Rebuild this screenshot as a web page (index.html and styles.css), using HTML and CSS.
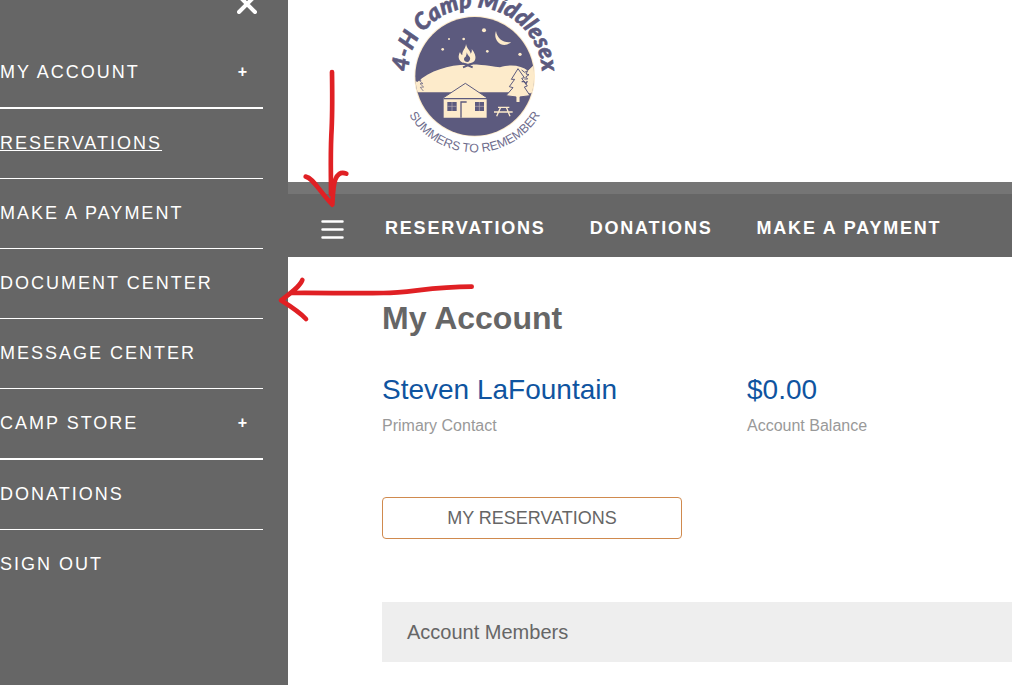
FILE: index.html
```
<!DOCTYPE html>
<html lang="en">
    <head>
        <meta charset="UTF-8">
        <title>My Account</title>
        <link rel="stylesheet" href="styles.css">
    </head>
    <body>
        <!-- side menu -->
        <aside class="sidebar">
            <div class="sidebar-top">
                <button type="button" class="close" aria-label="Close menu">
                    <svg width="20" height="20" viewBox="0 0 20 20">
                        <path d="M2 2L18 18M18 2L2 18"/>
                    </svg>
                </button>
            </div>
            <ul class="menu">
                <li class="has-sub"><a href="#">MY ACCOUNT</a><button type="button" class="plus">+</button></li>
                <li><a href="#" class="active">RESERVATIONS</a></li>
                <li><a href="#">MAKE A PAYMENT</a></li>
                <li><a href="#">DOCUMENT CENTER</a></li>
                <li><a href="#">MESSAGE CENTER</a></li>
                <li class="has-sub"><a href="#">CAMP STORE</a><button type="button" class="plus">+</button></li>
                <li><a href="#">DONATIONS</a></li>
                <li><a href="#">SIGN OUT</a></li>
            </ul>
        </aside>

        <div class="page">
            <header class="header">
                <svg class="logo" viewBox="0 0 570 480">
                    <defs>
                        <path id="arc-top" d="M84 240L84 224A201 201 0 0 1 486 224L486 240"/>
                        <path id="arc-bottom" d="M56 229A228 228 0 0 0 512 229"/>
                        <clipPath id="round"><circle cx="284" cy="229" r="178"/></clipPath>
                    </defs>
                    <circle cx="284" cy="229" r="181" fill="#fdebcb"/>
                    <g clip-path="url(#round)">
                        <rect x="100" y="40" width="370" height="380" fill="#5c5a7e"/>
                        <!-- hills -->
                        <path d="M100 240L112 246C150 212 205 194 262 194C310 192 342 201 360 202C395 191 425 198 444 212L470 190V277H100Z" fill="#fdebcb"/>
                        <path d="M115 230l8 12-6-1 12 10-9 0 11 10-10 1 9 11" fill="none" stroke="#5c5a7e" stroke-width="2"/>
                        <!-- moon and stars -->
                        <path d="M348 93C337 122 368 150 394 126C371 130 351 116 348 93Z" fill="#fdebcb"/>
                        <g fill="#fdebcb">
                            <circle cx="312" cy="91" r="6"/>
                            <circle cx="420" cy="163" r="5"/>
                            <circle cx="322" cy="154" r="4"/>
                            <circle cx="251" cy="117" r="4"/>
                            <circle cx="207" cy="117" r="3"/>
                            <circle cx="188" cy="148" r="4"/>
                        </g>
                        <!-- fire -->
                        <path d="M258 132C261 148 271 151 272 161C276 157 276 151 275 147C294 170 289 190 264 191C236 190 231 173 240 156C242 162 244 164 247 165C246 152 257 146 258 132Z" fill="#fdebcb"/>
                        <path d="M260 157C263 169 275 171 269 181Q267 186 263 186Q251 185 252 176Q253 171 257 170Q261 164 260 157Z" fill="#5c5a7e"/>
                        <path d="M249 190L278 202M278 190L249 202" stroke="#5c5a7e" stroke-width="6"/>
                        <!-- trees -->
                        <path d="M438 218L447 210L466 190V280H436V245L427 247L434 239L424 236Z" fill="#fdebcb"/>
                        <path d="M414 206L433 233L425 235L442 258L433 261L450 287L419 291V304H409V291L378 287L399 263L388 260L404 238L394 238Z" fill="#fdebcb" stroke="#5c5a7e" stroke-width="3"/>
                        <path d="M414 288V306" stroke="#fdebcb" stroke-width="9"/>
                        <path d="M425 210l9 7 9-5-5 10 9 2-10 7 6 6-10 0" fill="none" stroke="#5c5a7e" stroke-width="3"/>
                        <path d="M425 245h8l5 6 4-8" fill="none" stroke="#5c5a7e" stroke-width="4"/>
                        <!-- cabin -->
                        <path d="M189 294L256 250L322 294H320V353H191V294Z" fill="#fdebcb"/>
                        <path d="M189 294L256 250L322 294" fill="none" stroke="#5c5a7e" stroke-width="3"/>
                        <path d="M191 296H321M243 353V306H260" fill="none" stroke="#5c5a7e" stroke-width="4"/>
                        <path d="M202 306h28v27h-28zM285 306h27v27h-27z" fill="#5c5a7e"/>
                        <path d="M216 306v27M202 319h28M298 306v27M285 319h27" stroke="#b9aeb0" stroke-width="2"/>
                        <!-- picnic table -->
                        <path d="M354 322H388M342 336H398M362 322L350 349M379 322L390 349" stroke="#fdebcb" stroke-width="4"/>
                    </g>
                    <text class="logo-name"><textPath href="#arc-top" startOffset="50%">4-H Camp Middlesex</textPath></text>
                    <text class="logo-motto"><textPath href="#arc-bottom" startOffset="50%">SUMMERS TO REMEMBER</textPath></text>
                </svg>
            </header>

            <nav class="navbar">
                <button type="button" class="burger" aria-label="Open menu">
                    <svg width="23" height="19" viewBox="0 0 23 19">
                        <path d="M1.5 1.5H21.5M1.5 9.5H21.5M1.5 17.5H21.5"/>
                    </svg>
                </button>
                <div class="links">
                    <a href="#">RESERVATIONS</a>
                    <a href="#">DONATIONS</a>
                    <a href="#">MAKE A PAYMENT</a>
                </div>
            </nav>

            <main class="content">
                <h1>My Account</h1>
                <div class="summary">
                    <div>
                        <a href="#" class="value">Steven LaFountain</a>
                        <p>Primary Contact</p>
                    </div>
                    <div>
                        <a href="#" class="value">$0.00</a>
                        <p>Account Balance</p>
                    </div>
                </div>
                <button type="button" class="btn">MY RESERVATIONS</button>
                <h2>Account Members</h2>
            </main>
        </div>

        <!-- red arrows over the page -->
        <svg class="arrows" viewBox="0 0 660 810">
            <path d="M186 36C187 110 188 160 184 225C181 290 183 340 183 402"/>
            <path d="M107 350C130 354 146 392 187 434C190 392 188 326 229 341"/>
            <path d="M605 680C480 680 420 699 340 699C250 701 160 698 65 699"/>
            <path d="M97 660C90 680 60 700 33 721C60 738 90 758 108 777"/>
        </svg>
    </body>
</html>
```

FILE: styles.css
```
* {
    box-sizing: border-box;
}

body {
    margin: 0;
    display: flex;
    min-height: 100vh;
    overflow-x: hidden;
    font-family: "Liberation Sans", Arial, sans-serif;
    color: #666;
    background-color: #fff;
}

a {
    color: inherit;
    text-decoration: none;
}

button {
    padding: 0;
    border: 0;
    background: none;
    font-family: inherit;
    color: inherit;
    cursor: pointer;
}

svg {
    display: block;
}

/* side menu */
.sidebar {
    flex: none;
    width: 288px;
    padding-right: 25px;
    background-color: #666;
    color: #fff;
}

.sidebar-top {
    display: flex;
    justify-content: flex-end;
    align-items: flex-start;
    height: 38px;
    padding-right: 6px;
    overflow: hidden;
}

.close {
    margin-top: -6px;
}

.close path {
    stroke: #fff;
    stroke-width: 4;
    stroke-linecap: round;
}

.menu {
    margin: 0;
    padding: 0;
    list-style: none;
}

.menu li {
    display: flex;
    justify-content: space-between;
    align-items: center;
    height: 70px;
    border-bottom: 1px solid #fff;
    font-size: 18px;
    letter-spacing: 2px;
}

.menu .has-sub {
    height: 71px;
    border-bottom-width: 2px;
}

.menu li:last-child {
    border-bottom-color: transparent;
}

.menu .active {
    text-decoration: underline;
}

.plus {
    margin-right: 16px;
    padding-bottom: 2px;
    font-size: 16px;
    font-weight: bold;
}

/* right side */
.page {
    flex: 1;
    min-width: 0;
}

.header {
    height: 182px;
    padding-left: 92px;
}

.logo {
    width: 190px;
    height: 160px;
}

.logo-name {
    font-family: Lato, "Liberation Sans", sans-serif;
    font-size: 69px;
    font-weight: 900;
    font-style: italic;
    text-anchor: middle;
    fill: #5c5a7e;
    stroke: #5c5a7e;
    stroke-width: 2;
}

.logo-motto {
    font-family: "Liberation Sans Narrow", "Liberation Sans", sans-serif;
    font-size: 37px;
    text-anchor: middle;
    fill: #6f6d8d;
}

.navbar {
    display: flex;
    align-items: center;
    gap: 41px;
    height: 75px;
    padding: 8px 33px 0;
    border-top: 12px solid #757575;
    background-color: #666;
    color: #fff;
}

.links {
    display: flex;
    gap: 44px;
    padding-bottom: 2px;
    font-size: 18px;
    font-weight: bold;
    letter-spacing: 0.1em;
    white-space: nowrap;
}

.burger path {
    stroke: #fff;
    stroke-width: 2.5;
    stroke-linecap: round;
}

.content {
    padding: 41px 0 23px 94px;
}

h1 {
    margin: 0;
    font-size: 32px;
    line-height: 40px;
}

.summary {
    display: grid;
    grid-template-columns: 365px 1fr;
    margin: 34px 0 61px;
}

.value {
    font-size: 28px;
    line-height: 36px;
    color: #0f54a0;
}

.summary p {
    margin: 8px 0 0;
    font-size: 16px;
    line-height: 20px;
    color: #999;
}

.btn {
    display: block;
    width: 300px;
    height: 42px;
    border: 1px solid #d08a4e;
    border-radius: 4px;
    font-size: 18px;
}

h2 {
    margin: 63px 0 0;
    padding: 0 25px;
    background-color: #eee;
    font-size: 20px;
    font-weight: normal;
    line-height: 60px;
}

.arrows {
    position: absolute;
    top: 60px;
    left: 270px;
    width: 220px;
    height: 270px;
    pointer-events: none;
}

.arrows path {
    fill: none;
    stroke: #e02024;
    stroke-width: 14;
    stroke-linecap: round;
    stroke-linejoin: round;
}
```
